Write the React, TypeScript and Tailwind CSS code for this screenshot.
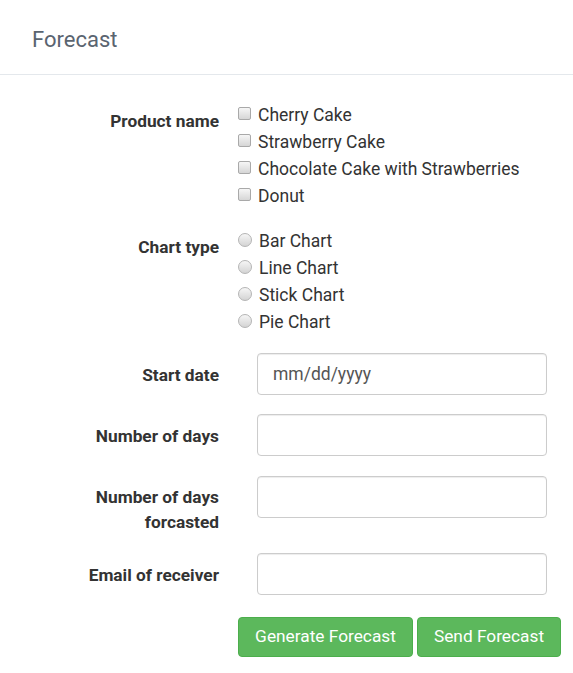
import { ReactNode } from 'react';

const products = ['Cherry Cake', 'Strawberry Cake', 'Chocolate Cake with Strawberries', 'Donut'];
const charts = ['Bar Chart', 'Line Chart', 'Stick Chart', 'Pie Chart'];

const Label = ({ children, top = 'pt-[9px]' }: { children: ReactNode; top?: string }) => (
    <div className={`w-[219px] shrink-0 text-right text-[17.3px] font-bold leading-[25px] text-[#333] ${top}`}>
        {children}
    </div>
);

const Check = ({ radio }: { radio?: boolean }) => (
    <span
        className={
            radio
                ? 'mt-[5px] inline-block h-[14px] w-[14px] shrink-0 rounded-full border border-[#b4b4b4] bg-linear-to-b from-[#f6f6f6] to-[#d4d4d4]'
                : 'mt-[5px] inline-block h-[13px] w-[13px] shrink-0 rounded-[2px] border border-[#a9a9a9] bg-linear-to-b from-[#f6f6f6] to-[#d6d6d6]'
        }
    />
);

const Options = ({ items, radio }: { items: string[]; radio?: boolean }) => (
    <div className="flex flex-col pt-[1px]">
        {items.map((item) => (
            <label key={item} className="flex h-[27px] items-start gap-[7px] text-[17.5px] leading-[27px] text-[#333]">
                <Check radio={radio} />
                <span>{item}</span>
            </label>
        ))}
    </div>
);

const TextInput = ({ placeholder }: { placeholder?: string }) => (
    <input
        type="text"
        placeholder={placeholder}
        className="ml-[19px] h-[42px] w-[290px] rounded-[4px] border border-[#ccc] bg-white px-[15px] text-[17.5px] text-[#555] shadow-[inset_0_1px_1px_rgba(0,0,0,0.075)] outline-none placeholder:text-[#555]"
    />
);

const App = () => {
    return (
        <div className="min-h-screen w-[573px] bg-white font-['Roboto',sans-serif]">
            {/* header */}
            <div className="flex h-[75px] items-center border-b border-[#e4e8ec] px-[32px] pt-[5px]">
                <h1 className="text-[22px] font-normal text-[#5a6470]">Forecast</h1>
            </div>

            <form className="flex flex-col pt-[26px]">
                <div className="flex gap-[19px]">
                    <Label top="pt-[8px]">Product name</Label>
                    <Options items={products} />
                </div>

                <div className="mt-[17px] flex gap-[19px]">
                    <Label top="pt-[8px]">Chart type</Label>
                    <Options items={charts} radio />
                </div>

                <div className="mt-[17px] flex gap-[19px]">
                    <Label top="pt-[10px]">Start date</Label>
                    <TextInput placeholder="mm/dd/yyyy" />
                </div>

                <div className="mt-[19px] flex gap-[19px]">
                    <Label top="pt-[10px]">Number of days</Label>
                    <TextInput />
                </div>

                <div className="mt-[20px] flex gap-[19px]">
                    <Label>
                        Number of days
                        <br />
                        forcasted
                    </Label>
                    <TextInput />
                </div>

                <div className="mt-[18px] flex gap-[19px]">
                    <Label top="pt-[10px]">Email of receiver</Label>
                    <TextInput />
                </div>

                {/* buttons */}
                <div className="ml-[238px] mt-[22px] flex gap-[4px]">
                    <button
                        type="button"
                        className="h-[40px] w-[175px] rounded-[4px] border border-[#4cae4c] bg-[#5cb85c] text-[17.3px] text-white"
                    >
                        Generate Forecast
                    </button>
                    <button
                        type="button"
                        className="h-[40px] w-[144px] rounded-[4px] border border-[#4cae4c] bg-[#5cb85c] text-[17.3px] text-white"
                    >
                        Send Forecast
                    </button>
                </div>
            </form>
        </div>
    );
};

export default App;
